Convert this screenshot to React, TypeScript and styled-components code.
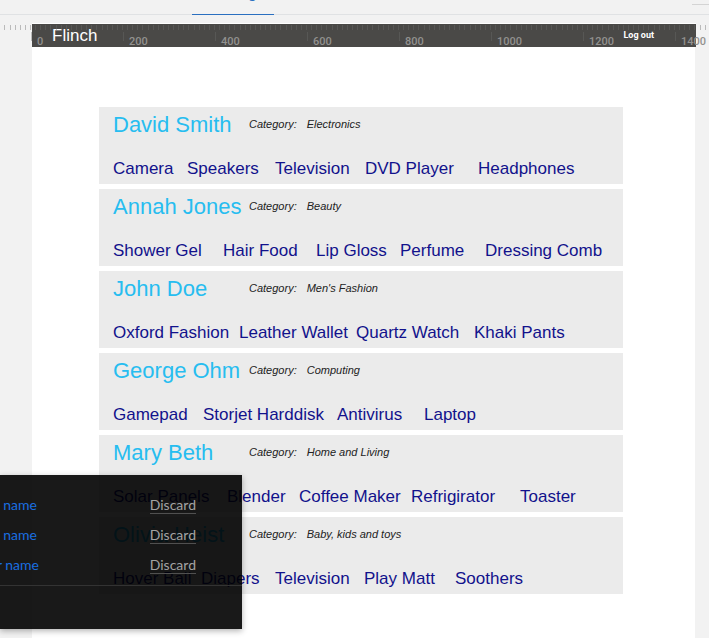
import React from "react";
import styled, { createGlobalStyle } from "styled-components";

const GlobalStyle = createGlobalStyle`
  * { box-sizing: border-box; }
  body {
    margin: 0;
    background: #f2f2f2;
    font-family: "Liberation Sans", Arial, sans-serif;
  }
`;

const Page = styled.div`
  position: relative;
  display: flex;
  flex-direction: column;
  min-height: 100vh;
  overflow: hidden;
`;

const TabBar = styled.nav`
  display: flex;
  justify-content: space-between;
  height: 15px;
  padding-left: 192px;
  border-bottom: 1px solid #e0e2e4;
`;

const Tab = styled.a`
  display: flex;
  align-items: flex-end;
  justify-content: flex-end;
  width: 82px;
  height: 15px;
  padding: 0 18px 12px 0;
  overflow: hidden;
  border-bottom: 1px solid #2a6fc0;
  color: #2a6fc0;
  font-family: Lato, sans-serif;
  font-size: 14px;
  line-height: 16px;
  text-decoration: none;
`;

const ToolbarBox = styled.div`
  width: 17px;
  height: 5px;
  border-bottom: 1px solid #d4d4d4;
`;

const Stage = styled.div`
  position: relative;
  display: flex;
  flex: 1;
  flex-direction: column;
  padding: 8px 14px 0 32px;
`;

const SiteHeader = styled.header`
  display: flex;
  align-items: flex-start;
  justify-content: space-between;
  height: 24px;
  margin-right: -1px;
  padding: 0 42px 0 20px;
  border-top: 1px solid #ffffff;
  background: #4a4947;
  color: #ffffff;
`;

const Brand = styled.h1`
  margin: 0;
  font-size: 17px;
  font-weight: 400;
  line-height: 24px;
`;

const LogOut = styled.a`
  color: #ffffff;
  font-family: Roboto, sans-serif;
  font-size: 9px;
  font-weight: 700;
  line-height: 22px;
  text-decoration: none;
`;

const RulerSvg = styled.svg`
  position: absolute;
  top: 9px;
  left: 0;
  width: 100%;
  height: 24px;
  pointer-events: none;

  line { stroke: #6c6c6c; stroke-opacity: 0.41; }
  text {
    fill: #92918f;
    font-family: Roboto, sans-serif;
    font-size: 11px;
    font-weight: 500;
  }
`;

const Canvas = styled.main`
  flex: 1;
  padding: 60px 72px 44px 67px;
  background: #ffffff;
`;

const SellerList = styled.div`
  display: flex;
  flex-direction: column;
  gap: 5px;
`;

const Card = styled.section`
  height: 77px;
  padding: 4px 14px;
  background: #ebebeb;
`;

const CardHead = styled.div`
  display: grid;
  grid-template-columns: 136px auto 1fr;
  align-items: center;
  height: 26px;
  color: #222222;
  font-size: 11px;
  font-style: italic;
  line-height: 12px;
  white-space: nowrap;
`;

const SellerName = styled.h2`
  margin: 0;
  padding-top: 2px;
  color: #27bdf0;
  font-size: 22px;
  font-style: normal;
  font-weight: 400;
  line-height: 24px;
`;

const Category = styled.span`
  margin-left: 10px;
`;

const Products = styled.div`
  display: flex;
  margin-top: 22px;
`;

const Product = styled.a<{ $span?: number }>`
  flex: none;
  width: ${({ $span }) => ($span ? `${$span}px` : "auto")};
  color: #12128c;
  font-size: 17px;
  line-height: 20px;
  text-decoration: none;
  white-space: nowrap;
`;

const Overlay = styled.aside`
  position: absolute;
  top: 475px;
  left: 0;
  width: 242px;
  height: 154px;
  padding-top: 15px;
  background: rgba(0, 0, 0, 0.9);
  box-shadow: 0 2px 6px rgba(0, 0, 0, 0.3);
  font-family: Lato, sans-serif;
  font-size: 14px;
`;

const OverlayRows = styled.div`
  padding-bottom: 5px;
  border-bottom: 1px solid #333333;
`;

const OverlayRow = styled.div`
  display: flex;
  align-items: center;
  justify-content: space-between;
  height: 30px;
  padding-right: 46px;
`;

const FieldName = styled.span<{ $wide?: boolean }>`
  display: flex;
  justify-content: flex-end;
  width: ${({ $wide }) => ($wide ? 39 : 37)}px;
  overflow: hidden;
  color: #1a6fe0;
  line-height: 18px;
  white-space: pre;
`;

const Discard = styled.button`
  padding: 0;
  border: 0;
  border-bottom: 1px solid #505050;
  background: none;
  color: #a3a3a3;
  font: inherit;
  line-height: 16px;
`;

type Item = [label: string, span?: number];

const sellers: { name: string; category: string; items: Item[] }[] = [
  {
    name: "David Smith",
    category: "Electronics",
    items: [["Camera", 74], ["Speakers", 88], ["Television", 90], ["DVD Player", 113], ["Headphones"]],
  },
  {
    name: "Annah Jones",
    category: "Beauty",
    items: [["Shower Gel", 110], ["Hair Food", 93], ["Lip Gloss", 84], ["Perfume", 85], ["Dressing Comb"]],
  },
  {
    name: "John Doe",
    category: "Men's Fashion",
    items: [["Oxford Fashion", 126], ["Leather Wallet", 117], ["Quartz Watch", 118], ["Khaki Pants"]],
  },
  {
    name: "George Ohm",
    category: "Computing",
    items: [["Gamepad", 90], ["Storjet Harddisk", 134], ["Antivirus", 87], ["Laptop"]],
  },
  {
    name: "Mary Beth",
    category: "Home and Living",
    items: [["Solar Panels", 114], ["Blender", 72], ["Coffee Maker", 112], ["Refrigirator", 109], ["Toaster"]],
  },
  {
    name: "Olivia Heist",
    category: "Baby, kids and toys",
    items: [["Hover Ball", 88], ["Diapers", 74], ["Television", 89], ["Play Matt", 91], ["Soothers"]],
  },
];

const fields = [
  { label: "name" },
  { label: "name" },
  { label: "r name", wide: true },
];

const MAJOR = 92;
const PER_MAJOR = 18;
const ORIGIN = 31;

function Ruler() {
  const minor = Array.from({ length: 320 }, (_, i) => Math.round(ORIGIN + ((i - 6) * MAJOR) / PER_MAJOR));
  const major = Array.from({ length: 8 }, (_, i) => i);
  return (
    <RulerSvg aria-hidden="true">
      {minor.map((x) => (
        <line key={x} x1={x - 0.5} x2={x - 0.5} y1={1} y2={6} />
      ))}
      {major.map((i) => (
        <g key={i}>
          <line x1={ORIGIN + i * MAJOR + 0.5} x2={ORIGIN + i * MAJOR + 0.5} y1={8} y2={17} />
          <text x={ORIGIN + i * MAJOR + 6} y={21}>{i * 200}</text>
        </g>
      ))}
    </RulerSvg>
  );
}

export default function App() {
  return (
    <Page>
      <GlobalStyle />
      <TabBar>
        <Tab href="#">g</Tab>
        <ToolbarBox />
      </TabBar>
      <Stage>
        <SiteHeader>
          <Brand>Flinch</Brand>
          <LogOut href="#">Log out</LogOut>
        </SiteHeader>
        <Ruler />
        <Canvas>
          <SellerList>
            {sellers.map((seller) => (
              <Card key={seller.name}>
                <CardHead>
                  <SellerName>{seller.name}</SellerName>
                  <span>Category:</span>
                  <Category>{seller.category}</Category>
                </CardHead>
                <Products>
                  {seller.items.map(([label, span]) => (
                    <Product key={label} href="#" $span={span}>{label}</Product>
                  ))}
                </Products>
              </Card>
            ))}
          </SellerList>
        </Canvas>
      </Stage>
      <Overlay>
        <OverlayRows>
          {fields.map((field, i) => (
            <OverlayRow key={i}>
              <FieldName $wide={field.wide}>{field.label}</FieldName>
              <Discard type="button">Discard</Discard>
            </OverlayRow>
          ))}
        </OverlayRows>
      </Overlay>
    </Page>
  );
}
